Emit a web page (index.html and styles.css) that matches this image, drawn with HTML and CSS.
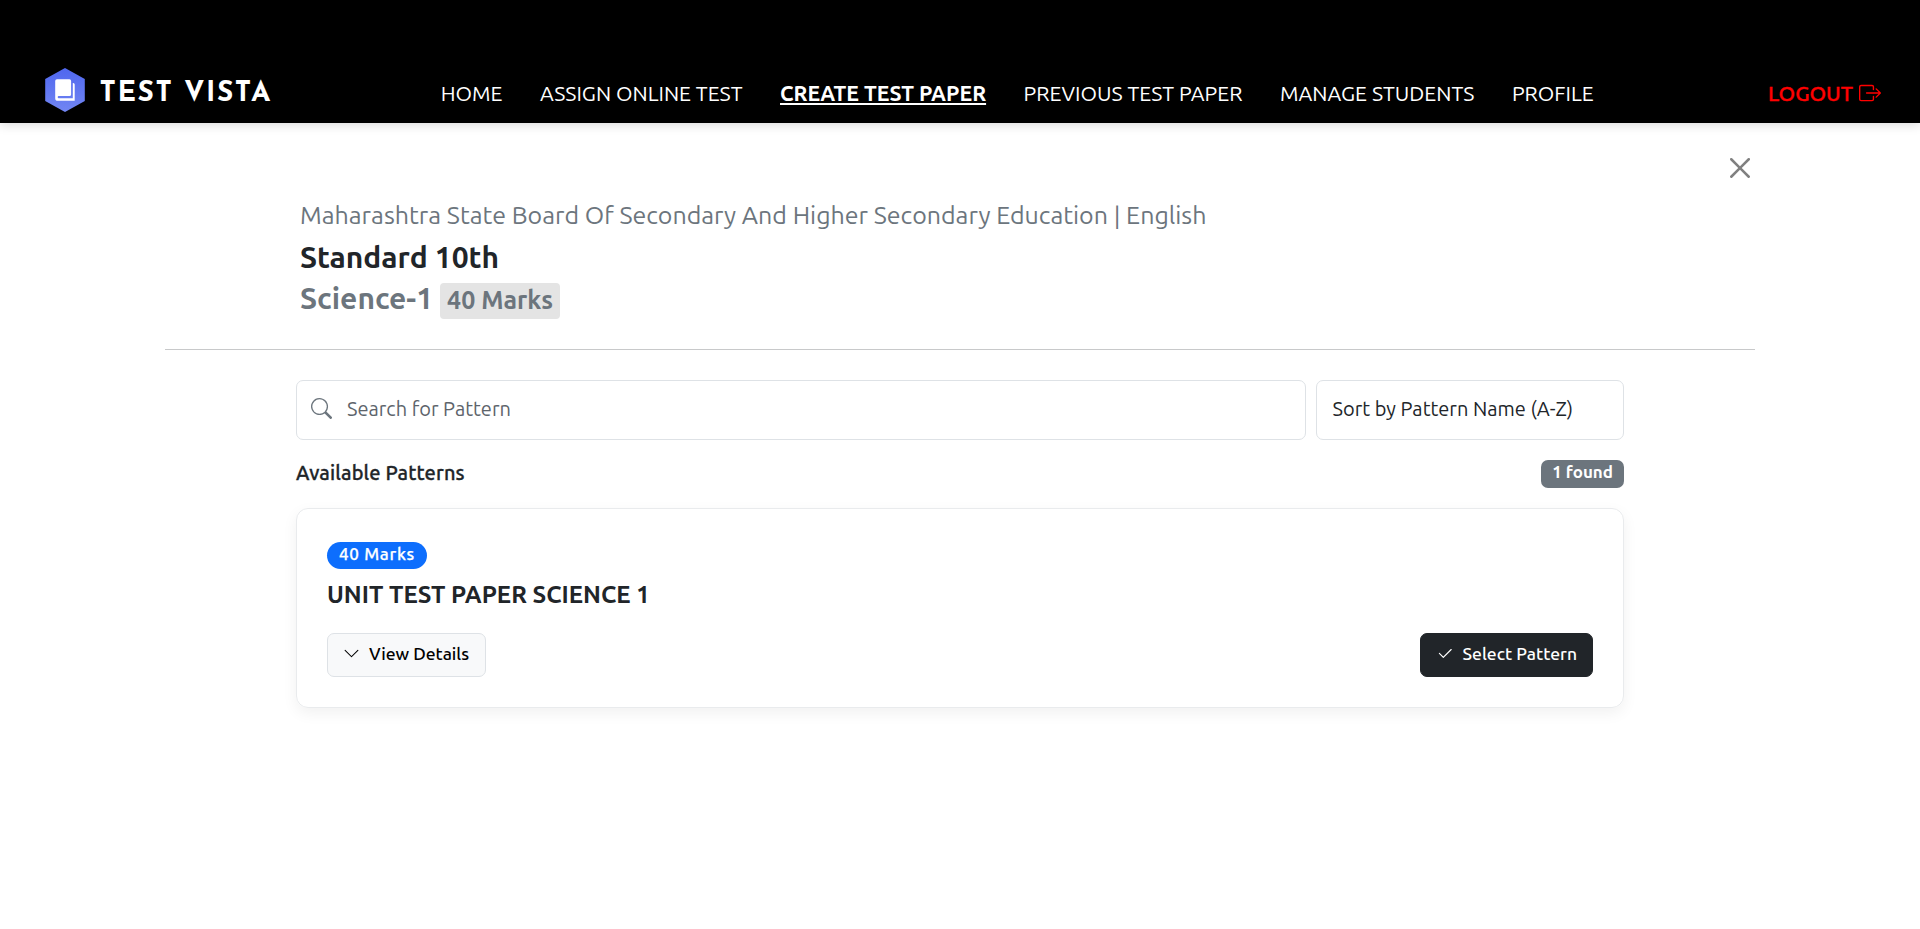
FILE: index.html
```html
<!DOCTYPE html>
<html lang="en">
<head>
<meta charset="utf-8">
<title>Test Vista - Create Test Paper</title>
<link rel="stylesheet" href="styles.css">
</head>
<body>
<header class="navbar">
  <a class="brand">
    <svg class="brand-mark" width="40" height="44" viewBox="0 0 40 44">
      <defs><linearGradient id="hex" x1="0" y1="0" x2="0" y2="1"><stop offset="0" stop-color="#4f67ee"/><stop offset="1" stop-color="#7286f3"/></linearGradient></defs>
      <path fill="url(#hex)" d="M20 0 39.8 11V33L20 44 .2 33V11z"/>
      <path fill="#fff" d="M12 11.3H24.5a1.6 1.6 0 0 1 1.6 1.6V26.4a1.6 1.6 0 0 1-1.6 1.6H13.4a1.2 1.2 0 0 0 0 2.200H27.8V15H28.2a1.5 1.5 0 0 1 1.5 1.5V32.8H12.8a2.6 2.6 0 0 1-2.6-2.6V13.1a1.8 1.8 0 0 1 1.8-1.8z"/>
    </svg>
    <span class="brand-name">TEST VISTA</span>
  </a>
  <nav class="links">
    <a>HOME</a>
    <a>ASSIGN ONLINE TEST</a>
    <a class="active">CREATE TEST PAPER</a>
    <a>PREVIOUS TEST PAPER</a>
    <a>MANAGE STUDENTS</a>
    <a>PROFILE</a>
  </nav>
  <a class="logout">LOGOUT
    <svg width="22" height="22" viewBox="0 0 16 16" fill="currentColor"><path d="M10 12.5a.5.5 0 0 1-.5.5h-8a.5.5 0 0 1-.5-.5v-9a.5.5 0 0 1 .5-.5h8a.5.5 0 0 1 .5.5v2a.5.5 0 0 0 1 0v-2A1.5 1.5 0 0 0 9.5 2h-8A1.5 1.5 0 0 0 0 3.5v9A1.5 1.5 0 0 0 1.5 14h8a1.5 1.5 0 0 0 1.5-1.5v-2a.5.5 0 0 0-1 0z"/><path d="M15.854 8.354a.5.5 0 0 0 0-.708l-3-3a.5.5 0 0 0-.708.708L14.293 7.5H5.5a.5.5 0 0 0 0 1h8.793l-2.147 2.146a.5.5 0 0 0 .708.708z"/></svg>
  </a>
</header>
<main class="page">
  <div class="close-row">
    <svg width="20" height="20" viewBox="0 0 16 16" fill="#808080"><path d="M.293.293a1 1 0 0 1 1.414 0L8 6.586 14.293.293a1 1 0 1 1 1.414 1.414L9.414 8l6.293 6.293a1 1 0 0 1-1.414 1.414L8 9.414l-6.293 6.293a1 1 0 0 1-1.414-1.414L6.586 8 .293 1.707a1 1 0 0 1 0-1.414z"/></svg>
  </div>
  <section class="heading">
    <div class="board">Maharashtra State Board Of Secondary And Higher Secondary Education | English</div>
    <div class="standard">Standard 10th</div>
    <div class="subject"><span>Science-1</span><span class="subject-marks">40 Marks</span></div>
  </section>
  <section class="patterns">
    <div class="filters">
      <div class="field search">
        <svg width="21" height="21" viewBox="0 0 16 16" fill="#6c757d"><path d="M11.742 10.344a6.5 6.5 0 1 0-1.397 1.398h-.001q.044.06.098.115l3.85 3.85a1 1 0 0 0 1.415-1.414l-3.85-3.85a1 1 0 0 0-.115-.1zM12 6.5a5.5 5.5 0 1 1-11 0 5.5 5.5 0 0 1 11 0"/></svg>
        <span>Search for Pattern</span>
      </div>
      <div class="field sort">Sort by Pattern Name (A-Z)</div>
    </div>
    <div class="summary"><span class="summary-title">Available Patterns</span><span class="count">1 found</span></div>
    <article class="card">
      <span class="pill">40 Marks</span>
      <h2 class="card-title">UNIT TEST PAPER SCIENCE 1</h2>
      <div class="actions">
        <button class="btn btn-light"><svg width="17" height="17" viewBox="0 0 16 16" fill="currentColor"><path d="M1.646 4.646a.5.5 0 0 1 .708 0L8 10.293l5.646-5.647a.5.5 0 0 1 .708.708l-6 6a.5.5 0 0 1-.708 0l-6-6a.5.5 0 0 1 0-.708"/></svg>View Details</button>
        <button class="btn btn-dark"><svg width="18" height="18" viewBox="0 0 16 16" fill="currentColor"><path d="M13.854 3.646a.5.5 0 0 1 0 .708l-7 7a.5.5 0 0 1-.708 0l-3.5-3.5a.5.5 0 1 1 .708-.708L6.5 10.293l6.646-6.647a.5.5 0 0 1 .708 0"/></svg>Select Pattern</button>
      </div>
    </article>
  </section>
</main>
</body>
</html>
```
FILE: styles.css
```css
* { box-sizing: border-box; }
body {
  margin: 0;
  background: #fff;
  color: #212529;
  font: 400 20px/1.5 Ubuntu, "Noto Sans", sans-serif;
}
svg { display: block; flex: none; }

/* Top bar */
.navbar {
  display: flex;
  align-items: flex-start;
  height: 123px;
  padding: 68px 39px 0 45px;
  background: #000;
  color: #fff;
  font-size: 21.25px;
  line-height: 32px;
  box-shadow: 0 2px 10px rgba(0, 0, 0, .15);
}
.brand { display: flex; width: 395.8px; }
.brand-name {
  margin-left: 14.5px;
  padding-top: 10px;
  font: 700 28px/32px "Josefin Sans", Lato, sans-serif;
  letter-spacing: 1.5px;
}
.links { display: flex; gap: 37.5px; padding-top: 9px; white-space: nowrap; }
.active {
  font-weight: 700;
  text-decoration: underline;
  text-decoration-thickness: 2px;
  text-underline-offset: 2px;
}
.logout {
  display: flex;
  gap: 6px;
  margin-left: auto;
  padding-top: 9px;
  color: #f00;
  font-weight: 500;
  -webkit-text-stroke: .35px;
}
.logout svg { margin-top: 4.5px; }

/* Paper heading */
.page { width: 1590px; min-height: 806px; margin: 0 auto; }
.close-row { display: flex; justify-content: flex-end; padding: 35px 5px 0 0; }
.heading { padding: 22px 0 33px 135px; border-bottom: 1px solid #c8c9ca; }
.board { color: #6c757d; font-size: 24.98px; line-height: 30px; }
.standard { margin-top: 9px; font-size: 30px; font-weight: 700; line-height: 36px; }
.subject {
  display: flex;
  gap: 7px;
  align-items: baseline;
  height: 36px;
  margin-top: 5px;
  color: #6c757d;
  font-size: 30px;
  font-weight: 700;
  line-height: 36px;
}
.subject-marks {
  padding: 5px 7px 6px;
  border-radius: 4px;
  background: #e4e4e4;
  font-size: 25px;
  line-height: 25px;
}

/* Search and sort */
.patterns { width: 1328px; margin: 30px auto 0; }
.filters { display: flex; gap: 10px; }
.field {
  display: flex;
  align-items: center;
  height: 60px;
  padding: 0 14px 2.5px 15.5px;
  border: 1px solid #dee2e6;
  border-radius: 7px;
}
.search { flex: 1; gap: 15.5px; padding-left: 13.5px; color: #5d646b; }
.sort { width: 308px; }
.summary { display: flex; justify-content: space-between; align-items: flex-start; margin-top: 18px; }
.summary-title { font-weight: 500; letter-spacing: .1px; -webkit-text-stroke: .3px; }
.count {
  height: 28px;
  margin-top: 2px;
  padding: 0 11px;
  border-radius: 7px;
  background: #6c757d;
  color: #fff;
  font-size: 17px;
  font-weight: 700;
  line-height: 24px;
}

/* Pattern card */
.card {
  height: 200px;
  margin-top: 20px;
  padding: 33px 30px 0;
  border: 1px solid #e9ebed;
  border-radius: 12px;
  box-shadow: 0 5px 15px rgba(0, 0, 0, .06);
}
.pill {
  display: block;
  width: 100px;
  height: 27px;
  padding-left: 12px;
  border-radius: 14px;
  background: #0d6efd;
  color: #fff;
  font-size: 17px;
  font-weight: 500;
  line-height: 24px;
  letter-spacing: .7px;
  -webkit-text-stroke: .25px;
}
.card-title { margin: 11px 0 0; font-size: 24px; font-weight: 700; line-height: 30px; }
.actions { display: flex; justify-content: space-between; margin-top: 23px; }
.btn {
  display: flex;
  align-items: center;
  gap: 9px;
  height: 44px;
  padding: 0 15px 3px;
  border: 1px solid;
  border-radius: 7px;
  font: 500 17.5px/26px Ubuntu, "Noto Sans", sans-serif;
}
.btn-light { padding-right: 16px; border-color: #dee2e6; background: #f8f9fa; color: #000; }
.btn-dark { border-color: #212529; background: #212529; color: #fff; }
```
